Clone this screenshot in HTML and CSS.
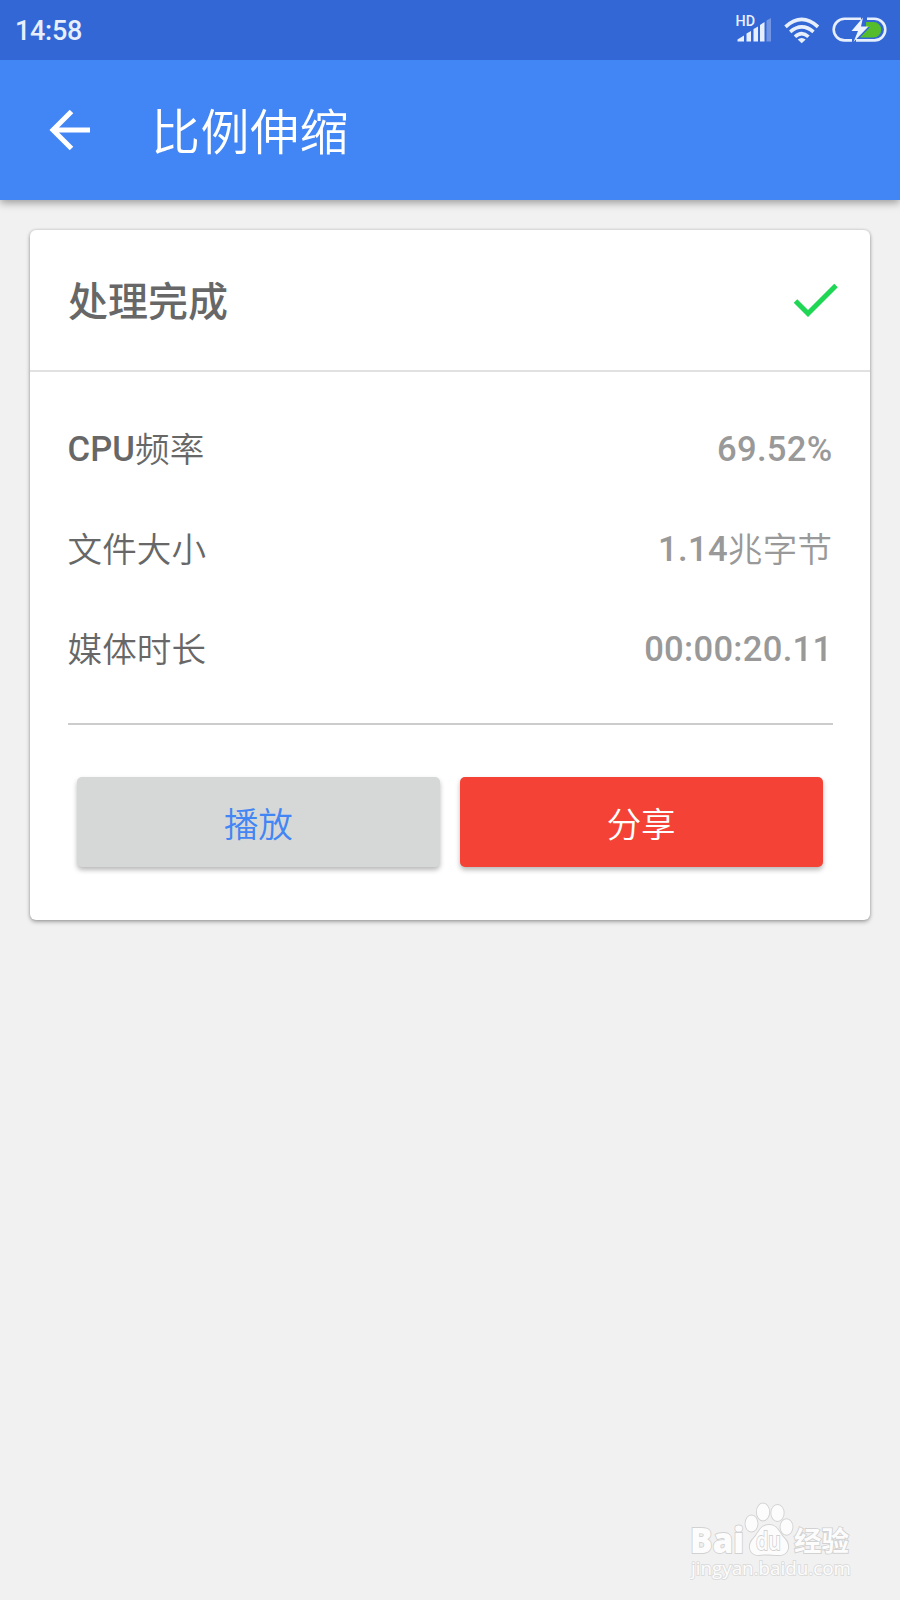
FILE: index.html
```html
<!DOCTYPE html>
<html lang="zh-CN">
<head>
<meta charset="utf-8">
<title>比例伸缩</title>
<link rel="stylesheet" href="styles.css">
</head>
<body>
<div class="screen">
  <div class="statusbar">
    <span class="clock">14:58</span>
    <svg class="status-icons" width="160" height="60" viewBox="0 0 160 60">
      <text class="hd" x="0.500" y="26" textLength="19.500" lengthAdjust="spacingAndGlyphs">HD</text>
      <g fill="#e8effc">
        <path d="M2.500 41.500V39.500L9 35.500V41.500Z"/>
        <path d="M11.500 33.500 16 31V41.500H11.500ZM18.500 29 23 26.500V41.500H18.500ZM25 25 29.500 22V41.500H25Z"/>
        <path d="M31.500 20.500 36 18V41.500H31.500Z" opacity=".35"/>
      </g>
      <g fill="none" stroke="#e8effc" stroke-width="3.600">
        <path d="M50.500 26.800Q66.700 12 83 26.800M55.200 31.800Q66.700 21.800 78.500 31.800M60 36.800Q66.700 30.500 73.500 36.800"/>
      </g>
      <path fill="#e8effc" d="M62.700 39.500Q66.700 36.500 70.700 39.500L66.700 43.200Z"/>
      <path fill="none" stroke="#e8effc" stroke-width="2.600" d="M126 18.800H109.500A10.800 10.800 0 0 0 109.500 40.400H117M132 18.800H139.500A10.800 10.800 0 0 1 139.500 40.400H121"/>
      <path fill="#55bd2b" d="M131 22H138.500A7.700 7.700 0 0 1 138.500 37.400H125L135 27H131Z"/>
      <path fill="#eef4ff" d="M128 17.500 116.500 31H123L118.500 42 133.500 26.500H126Z"/>
    </svg>
  </div>
  <header class="appbar">
    <svg class="back" width="42" height="42" viewBox="0 0 42 42"><path d="M41 21H4M22.500 2.500 4 21 22.500 39.500" fill="none" stroke="#fff" stroke-width="5"/></svg>
    <h1 class="title">比例伸缩</h1>
  </header>
  <main class="card">
    <div class="card-head">
      <h2 class="card-title">处理完成</h2>
      <svg class="check" width="46" height="36" viewBox="0 0 46 36"><path d="M2.500 19 15 31.500 43 3.500" fill="none" stroke="#1fd655" stroke-width="5"/></svg>
    </div>
    <div class="card-body">
      <div class="row"><span class="label"><b>CPU</b>频率</span><span class="value"><b>69.52%</b></span></div>
      <div class="row"><span class="label">文件大小</span><span class="value"><b>1.14</b>兆字节</span></div>
      <div class="row"><span class="label">媒体时长</span><span class="value"><b>00:00:20.11</b></span></div>
      <div class="actions">
        <button class="btn btn-play">播放</button>
        <button class="btn btn-share">分享</button>
      </div>
    </div>
  </main>
  <footer class="brand">
    <svg width="170" height="90" viewBox="0 0 170 90">
      <g class="brand-mark">
        <text class="brand-latin" x="0" y="54" textLength="54" lengthAdjust="spacingAndGlyphs">Bai</text>
        <ellipse cx="61.500" cy="24.500" rx="6" ry="8"/>
        <ellipse cx="73" cy="13" rx="6.200" ry="8.500"/>
        <ellipse cx="87.500" cy="14" rx="6.200" ry="8"/>
        <ellipse cx="96.500" cy="28" rx="6" ry="7.800"/>
        <path d="M79 26C88 26 89 34 94 39C101 46 99 56 89 56C83 56 75 55 69 56C59 56 57 46 64 39C69 34 70 26 79 26Z"/>
        <text class="brand-du" x="66" y="51" textLength="25" lengthAdjust="spacingAndGlyphs">du</text>
        <text class="brand-cjk" x="104" y="52" textLength="55" lengthAdjust="spacingAndGlyphs">经验</text>
        <text class="brand-url" x="1" y="76" textLength="160" lengthAdjust="spacingAndGlyphs">jingyan.baidu.com</text>
      </g>
    </svg>
  </footer>
</div>
</body>
</html>
```
FILE: styles.css
```css
* { box-sizing: border-box; }
body { margin: 0; font-family: Roboto, "Noto Sans CJK SC", sans-serif; background: #f1f1f1; }
h1, h2 { margin: 0; }
.screen { width: 900px; height: 1600px; display: flex; flex-direction: column; overflow: hidden; }
.statusbar { position: relative; z-index: 1; height: 60px; flex: none; background: #3367d6; display: flex; align-items: center; justify-content: space-between; padding: 0 5px 0 15px; }
.clock { font-size: 27px; font-weight: 500; letter-spacing: -.3px; color: #e8effc; line-height: 60px; padding-top: 2px; }
.hd { font: 500 14px Roboto, sans-serif; fill: #e8effc; }
.appbar { height: 140px; flex: none; background: #4285f4; display: flex; align-items: center; padding: 0 49px; gap: 60px; box-shadow: 0 3px 8px rgba(0,0,0,.35); }
.title { color: #fff; font-weight: 350; font-size: 49px; letter-spacing: .5px; line-height: 60px; padding-top: 7px; }
.card { margin: 30px 30px 0; height: 690px; flex: none; background: #fff; border-radius: 6px; box-shadow: 0 2px 4px rgba(0,0,0,.3), 0 0 3px rgba(0,0,0,.18); }
.card-head { height: 142px; border-bottom: 2px solid #e1e1e1; padding: 0 31px 0 38px; display: flex; align-items: center; justify-content: space-between; }
.card-title { font-size: 40px; font-weight: 500; line-height: 50px; color: #676767; padding-top: 6px; }
.card-body { padding: 27px 37.500px 0; }
.row { height: 100px; padding-top: 2px; display: flex; align-items: center; justify-content: space-between; font-size: 34.600px; line-height: 40px; font-weight: 350; }
.row b { font-weight: 500; line-height: 1; vertical-align: 1px; }
.label { color: #676767; letter-spacing: .1px; }
.value { color: #999; letter-spacing: .3px; }
.actions { margin-top: 24px; border-top: 2px solid #ccc; padding: 52px 10px 0 9.500px; display: flex; gap: 20px; }
.btn { flex: 1; height: 90px; border: 0; border-radius: 5px; font: 350 34.500px Roboto, "Noto Sans CJK SC", sans-serif; padding: 0; box-shadow: 0 3px 5px rgba(0,0,0,.28); }
.btn-play { background: #d6d8d7; color: #4285f4; }
.btn-share { background: #f44336; color: #fff; }
.brand { margin-top: auto; align-self: flex-end; width: 210px; height: 101px; }
.brand-mark { fill: #fcfcfc; stroke: #d2d2d2; stroke-width: 1.800px; paint-order: stroke; }
.brand-latin { font: 800 35px "Open Sans", sans-serif; }
.brand-du { font: 600 25px "Open Sans", sans-serif; }
.brand-cjk { font: 700 27px "Noto Sans CJK SC", sans-serif; }
.brand-url { font: 400 19px "Open Sans", sans-serif; stroke: #dcdcdc; }
```
